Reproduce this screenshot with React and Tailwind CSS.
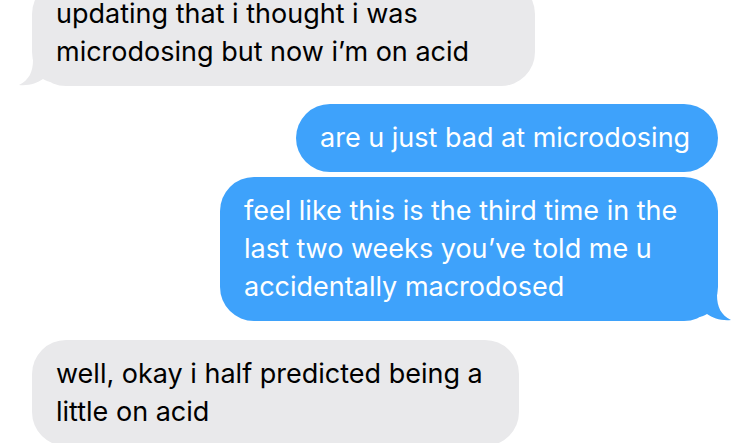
import React from "react";

function Tail({ side, color }) {
  if (side === "left") {
    return (
      <svg
        className="absolute bottom-0 -left-[13px]"
        width="34"
        height="26"
        viewBox="0 0 34 26"
      >
        <path d="M14 0 C14 12 10 20 0 25 C10 26 18 23 24 19 C27 21 30 22 34 22 L34 0 Z" fill={color} />
      </svg>
    );
  }
  return (
    <svg
      className="absolute bottom-0 -right-[13px]"
      width="34"
      height="26"
      viewBox="0 0 34 26"
    >
      <path d="M20 0 C20 12 24 20 34 25 C24 26 16 23 10 19 C7 21 4 22 0 22 L0 0 Z" fill={color} />
    </svg>
  );
}

function Bubble({ me, lines, width, tail }) {
  const color = me ? "#3ea2fb" : "#e9e9eb";
  return (
    <div
      className={
        "relative rounded-[34px] px-6 py-[15px] text-[27px] leading-[38px] " +
        (me ? "self-end bg-[#3ea2fb] text-white" : "self-start bg-[#e9e9eb] text-black")
      }
      style={{ width }}
    >
      {lines.map((l, i) => (
        <div key={i} className="whitespace-nowrap">{l}</div>
      ))}
      {tail && <Tail side={me ? "right" : "left"} color={color} />}
    </div>
  );
}

export default function App() {
  return (
    <div
      className="w-[750px] h-[443px] overflow-hidden bg-white"
      style={{ fontFamily: "Inter, 'Liberation Sans', sans-serif" }}
    >
      <div className="-mt-[20px] flex flex-col px-8">
        <Bubble
          lines={["updating that i thought i was", "microdosing but now i’m on acid"]}
          width={503}
          tail
        />
        <div className="h-[18px]" />
        <Bubble me lines={["are u just bad at microdosing"]} width={422} />
        <div className="h-[5px]" />
        <Bubble
          me
          lines={[
            "feel like this is the third time in the",
            "last two weeks you’ve told me u",
            "accidentally macrodosed",
          ]}
          width={498}
          tail
        />
        <div className="h-[19px]" />
        <Bubble
          lines={["well, okay i half predicted being a", "little on acid"]}
          width={487}
        />
      </div>
    </div>
  );
}
